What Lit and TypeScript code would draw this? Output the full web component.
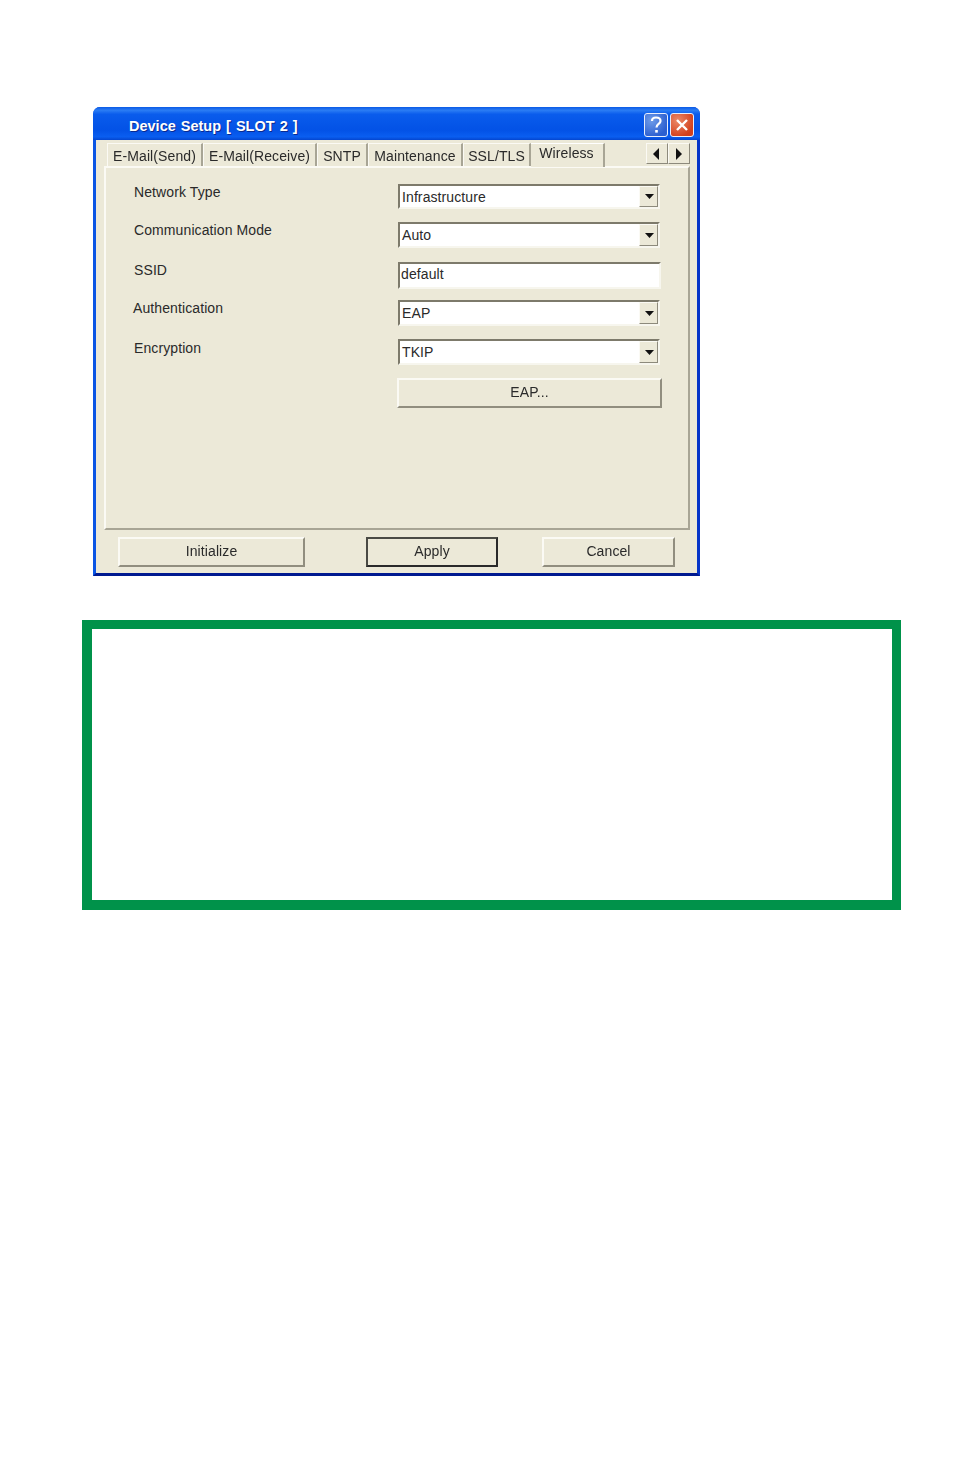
import { LitElement, html, css } from "lit";
import { customElement } from "lit/decorators.js";

const FONT_TABS = ["E-Mail(Send)", "E-Mail(Receive)", "SNTP", "Maintenance", "SSL/TLS"];
const TAB_WIDTHS = [96, 114, 51, 95, 68];

@customElement("app-root")
export class AppRoot extends LitElement {
  static styles = css`
    :host { display: block; width: 954px; height: 1475px; background: #fff; overflow: hidden;
      font-family: "Liberation Sans", Arial, sans-serif; font-size: 14px; letter-spacing: 0.1px; color: #2a2a2a; }
    .page { padding: 107px 0 0 82px; display: flex; flex-direction: column; }
    .window { margin-left: 11px; width: 607px; height: 469px; box-sizing: border-box; display: flex; flex-direction: column;
      border-radius: 7px 7px 0 0; background: #0a4fdc; border-left: 3px solid #0a55e4; border-right: 3px solid #0635c8; border-bottom: 3px solid #001a90; filter: blur(0.35px); }
    .title { height: 33px; flex: none; display: flex; align-items: center; margin: 0 -3px; padding: 0 6px 0 36px; border-radius: 7px 7px 0 0;
      background: linear-gradient(180deg, #0a5ae6 0%, #2a7cf4 10%, #0a5cec 22%, #0352e6 70%, #0a5ef0 90%, #0446d0 100%); }
    .title-text { flex: 1; color: #fff; font-weight: bold; font-size: 14.5px; letter-spacing: 0; word-spacing: 1px; text-shadow: 1px 1px 0 #0a2a90; padding-top: 4px; }
    .cap { width: 24px; height: 24px; box-sizing: border-box; border: 1px solid #e8eefc; border-radius: 3px; margin: 2px 0 0 2px; display: flex; align-items: center; justify-content: center; }
    .help { background: radial-gradient(circle at 30% 30%, #6f9ce8, #2c5fd0 75%); }
    .close { background: radial-gradient(circle at 30% 30%, #ec8a68, #d2401c 75%); }
    .cap svg { display: block; }
    .body { flex: 1; background: #ece9d8; display: flex; flex-direction: column; padding-top: 3px; }
    .tabs { height: 23px; flex: none; display: flex; padding-left: 11px; position: relative; z-index: 1; }
    .tab { box-sizing: border-box; height: 23px; text-align: center; line-height: 25px; border-right: 2px solid #a8a595; border-left: 1px solid #fbfaf4; border-top: 1px solid #fbfaf4; white-space: nowrap; }
    .tab.active { height: 24px; width: 74px; line-height: 19px; border-top: 1px solid #fff; background: #ece9d8; border-left: none; padding-right: 1px; }
    .spacer { width: 41px; }
    .arrow { width: 22px; height: 21px; box-sizing: border-box; background: #ece9d8; border: 1px solid; border-color: #fbfaf4 #8d8a7c #8d8a7c #fbfaf4; display: flex; align-items: center; justify-content: center; }
    .arrow.left { padding-right: 3px; }
    .panel { width: 586px; height: 364px; margin-left: 8px; box-sizing: border-box; border: 2px solid; border-color: #fbfaf4 #a8a595 #a8a595 #fbfaf4; padding: 16px 0 0 28px;
      display: grid; grid-template-columns: 264px 264px; grid-template-rows: 38px 40px 38px 39px 39px 30px; align-content: start; }
    .label { line-height: 16px; }
    .label.auth { margin-left: -1px; }
    .label.enc { padding-top: 1px; }
    .field { box-sizing: border-box; width: 262px; background: #fff; border: 2px solid; border-color: #7d7a6b #f7f6ee #f7f6ee #7d7a6b; display: flex; align-items: center; padding-left: 2px; line-height: 16px; }
    .sel { height: 25px; }
    .sel2 { height: 26px; }
    .input { height: 27px; width: 263px; padding-left: 1px; padding-bottom: 3px; }
    .val { flex: 1; }
    .drop { width: 19px; height: 100%; box-sizing: border-box; background: #ece9d8; border: 1px solid; border-color: #fbfaf4 #8d8a7c #8d8a7c #fbfaf4; display: flex; align-items: center; justify-content: center; padding-left: 1px; }
    .btn { box-sizing: border-box; height: 30px; display: flex; align-items: center; justify-content: center; background: #ece9d8; border: 2px solid; border-color: #fbfaf4 #918e7f #918e7f #fbfaf4; font: inherit; letter-spacing: inherit; color: inherit; padding: 0 0 2px; }
    .eap { width: 265px; margin-left: -1px; }
    .footer { display: flex; padding: 7px 0 0 22px; }
    .init { width: 187px; }
    .apply { width: 132px; margin-left: 61px; border-color: #4a4a44 #2a2a2a #2a2a2a #4a4a44; }
    .cancel { width: 133px; margin-left: 44px; }
    .box { margin-top: 44px; width: 819px; height: 290px; box-sizing: border-box; border: solid #00924a; border-width: 9px 9px 10px 10px; background: #fff; }
  `;

  private tri(dir: "l" | "r" | "d") {
    const pts = dir === "l" ? "7,0 7,12 1,6" : dir === "r" ? "1,0 1,12 7,6" : "";
    if (dir === "d") return html`<svg width="9" height="5" viewBox="0 0 9 5"><polygon points="0,0 9,0 4.5,5" fill="#111"></polygon></svg>`;
    return html`<svg width="8" height="12" viewBox="0 0 8 12"><polygon points=${pts} fill="#111"></polygon></svg>`;
  }

  private select(value: string, cls = "sel") {
    return html`<div class="field ${cls}"><span class="val">${value}</span><span class="drop">${this.tri("d")}</span></div>`;
  }

  render() {
    return html`
      <div class="page">
        <div class="window">
          <div class="title">
            <span class="title-text">Device Setup [ SLOT 2 ]</span>
            <span class="cap help"><svg width="14" height="18" viewBox="0 0 14 18"><path d="M3 5 C3 2 5 1.5 7 1.5 C10 1.5 11.5 3 11.5 5 C11.5 8 7.5 8 7.5 11.5" fill="none" stroke="#fff" stroke-width="2.2"></path><rect x="6.2" y="14" width="2.6" height="2.6" fill="#fff"></rect></svg></span>
            <span class="cap close"><svg width="14" height="14" viewBox="0 0 14 14"><path d="M2 2 L12 12 M12 2 L2 12" stroke="#fff" stroke-width="2.4"></path></svg></span>
          </div>
          <div class="body">
            <div class="tabs">
              ${FONT_TABS.map((t, i) => html`<div class="tab" style="width:${TAB_WIDTHS[i]}px">${t}</div>`)}
              <div class="tab active">Wireless</div>
              <div class="spacer"></div>
              <div class="arrow left">${this.tri("l")}</div>
              <div class="arrow">${this.tri("r")}</div>
            </div>
            <div class="panel">
              <div class="label">Network Type</div>${this.select("Infrastructure")}
              <div class="label">Communication Mode</div>${this.select("Auto", "sel2")}
              <div class="label">SSID</div><div class="field input">default</div>
              <div class="label auth">Authentication</div>${this.select("EAP", "sel2")}
              <div class="label enc">Encryption</div>${this.select("TKIP", "sel2")}
              <div></div><button class="btn eap">EAP...</button>
            </div>
            <div class="footer">
              <button class="btn init">Initialize</button>
              <button class="btn apply">Apply</button>
              <button class="btn cancel">Cancel</button>
            </div>
          </div>
        </div>
        <div class="box"></div>
      </div>
    `;
  }
}
